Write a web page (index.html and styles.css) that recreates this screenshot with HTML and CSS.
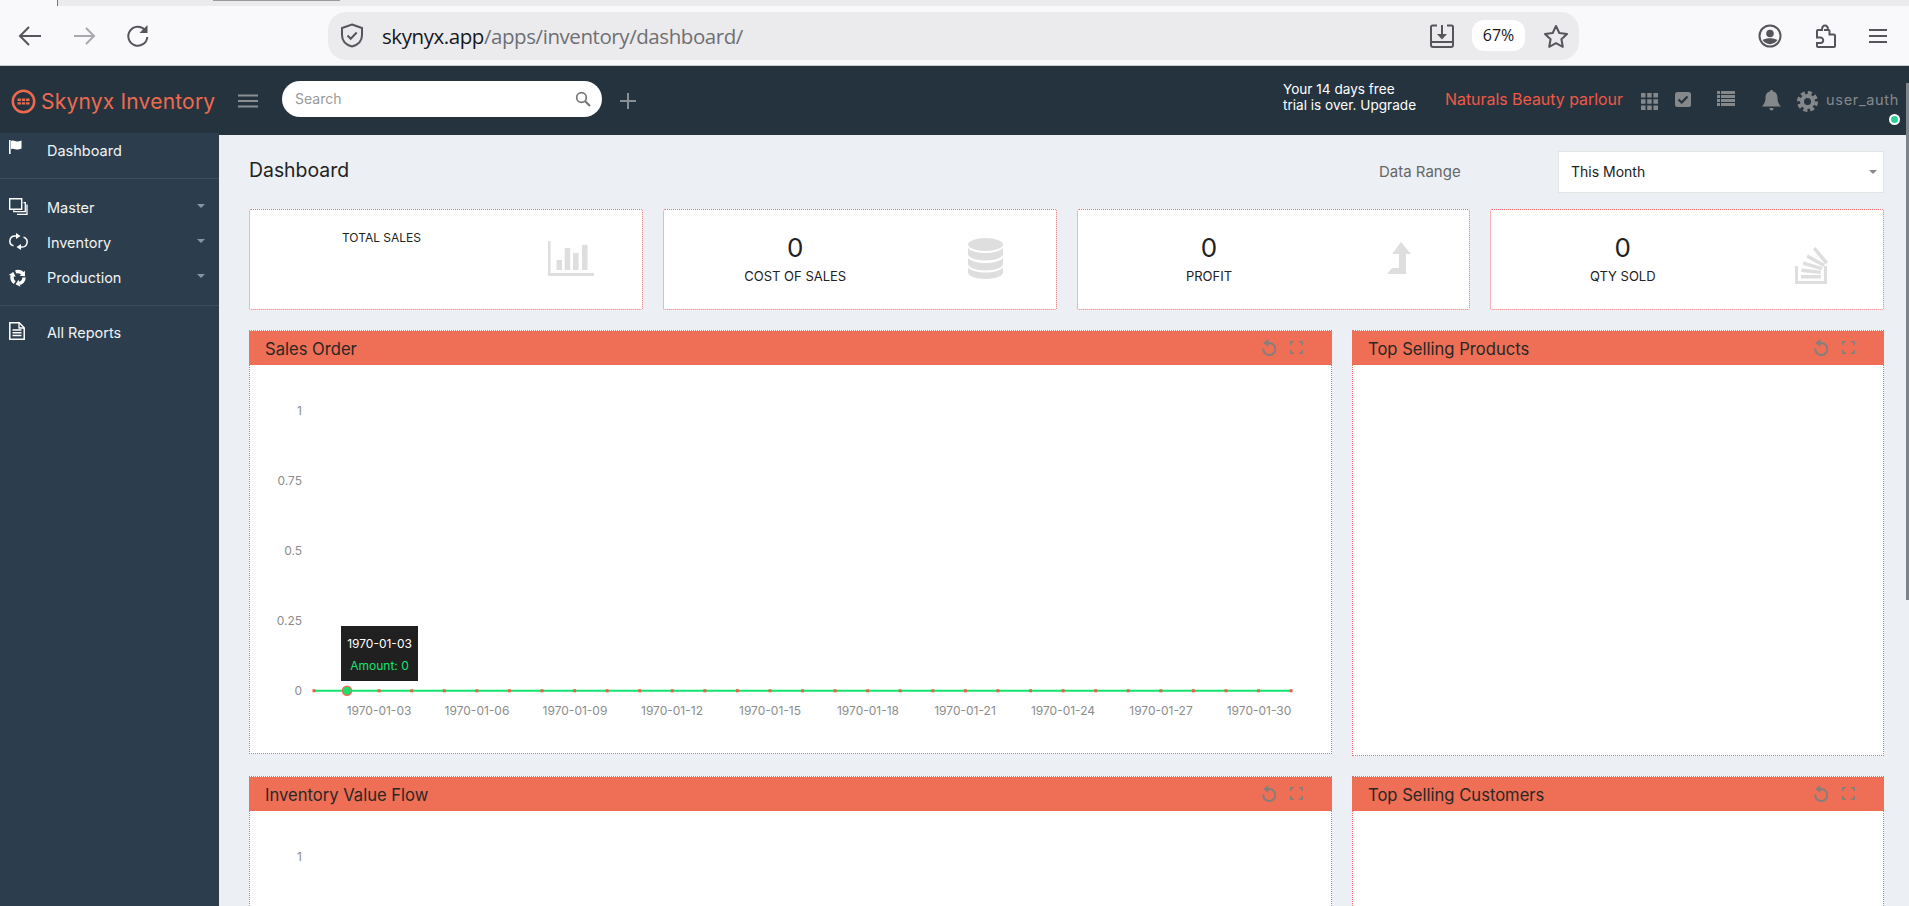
FILE: index.html
```html
<!DOCTYPE html>
<html lang="en">
  <head>
  <meta charset="utf-8">
  <title>Skynyx Inventory</title>
  <link rel="stylesheet" href="styles.css">
  </head>
  <body>
    <div class="tabstrip">
      <span class="tab-left"></span>
      <span class="tab-shadow"></span>
    </div>

    <div class="toolbar">
      <svg class="tool-back" width="24" height="22" viewBox="0 0 24 22"><path d="M23 11H3M11 2l-9 9 9 9" fill="none" stroke="#55555b" stroke-width="2"/></svg>
      <svg class="tool-fwd" width="22" height="22" viewBox="0 0 22 22"><path d="M0 11h19M12 3l8 8-8 8" fill="none" stroke="#a9a9ad" stroke-width="2"/></svg>
      <svg class="tool-reload" width="23" height="24" viewBox="0 0 23 24"><path d="M19 6a9.5 9.5 0 1 0 2.3 7" fill="none" stroke="#55555b" stroke-width="2"/><path d="M21.500 1v8h-8z" fill="#55555b"/></svg>
      <div class="addressbar">
        <svg class="shield" width="24" height="25" viewBox="0 0 24 25"><path d="M12 1.500l10 3.500v7c0 6-4.500 10-10 11.500C6.500 22 2 18 2 12V5z" fill="none" stroke="#55555b" stroke-width="2"/><path d="M7.500 12.500l3.200 3.200 6-6.200" fill="none" stroke="#55555b" stroke-width="2"/></svg>
        <div class="url"><span class="url-host">skynyx.app</span>/apps/inventory/dashboard/</div>
        <svg class="tool-install" width="24" height="24" viewBox="0 0 24 24"><path d="M7 1.500H2.500a1.500 1.500 0 0 0-1.500 1.500v18a2 2 0 0 0 2 2h18a2 2 0 0 0 2-2V3a1.500 1.500 0 0 0-1.500-1.500H17M1 18h22" fill="none" stroke="#55555b" stroke-width="2"/><path d="M12 1v11" stroke="#55555b" stroke-width="2"/><path d="M7 10h10l-5 5.500z" fill="#55555b"/></svg>
        <div class="zoom-pill">67%</div>
        <svg class="tool-star" width="26" height="24" viewBox="0 0 26 24"><path d="M13 2l3.300 7 7.700 1-5.600 5.300 1.400 7.500-6.800-3.700-6.800 3.700 1.400-7.500L2 10l7.700-1z" fill="none" stroke="#55555b" stroke-width="2" stroke-linejoin="round"/></svg>
      </div>
      <svg class="tool-profile" width="24" height="24" viewBox="0 0 24 24"><circle cx="12" cy="12" r="10.500" fill="none" stroke="#55555b" stroke-width="2"/><circle cx="12" cy="9.500" r="3.800" fill="#55555b"/><path d="M4.500 16c4-2.500 11-2.500 15 0-3.500 5.500-11.500 5.500-15 0z" fill="#55555b"/></svg>
      <svg class="tool-puzzle" width="21" height="24" viewBox="0 0 21 24"><path d="M9 6H13.500a1 1 0 0 1 1 1v3.500H19a1 1 0 0 1 1 1V22a1 1 0 0 1-1 1H3a1 1 0 0 1-1-1v-3h3.500a2.700 2.700 0 0 0 0-5.400H2V7a1 1 0 0 1 1-1h4c0-6 6-6 6 0" fill="none" stroke="#55555b" stroke-width="2"/></svg>
      <svg class="tool-menu" width="18" height="16" viewBox="0 0 18 16"><path d="M0 2h18M0 8h18M0 14h18" stroke="#55555b" stroke-width="2"/></svg>
    </div>

    <header class="topbar">
      <svg class="logo" width="25" height="25" viewBox="0 0 25 25"><circle cx="12.500" cy="12.500" r="10.700" fill="none" stroke="#ee6a4f" stroke-width="2.500"/><path d="M6.500 9.500h3.400v2.400H6.500zM10.800 9.500h3.400v2.400h-3.400zM15.100 9.500h3.400v2.400h-3.400zM6.500 13.200h3.400v2.400H6.500zM10.800 13.200h3.400v2.400h-3.400zM15.100 13.200h3.400v2.400h-3.400z" fill="#ee6a4f"/></svg>
      <div class="brand">Skynyx Inventory</div>
      <svg class="burger" width="20" height="14" viewBox="0 0 20 14"><path d="M0 1.500h20M0 7h20M0 12.500h20" stroke="#8a8f93" stroke-width="2.200"/></svg>
      <div class="search">
        <span class="search-text">Search</span>
        <svg width="16" height="16" viewBox="0 0 16 16"><circle cx="6.500" cy="6.500" r="4.800" fill="none" stroke="#777" stroke-width="1.700"/><path d="M10 10l5 5" stroke="#777" stroke-width="2.200"/></svg>
      </div>
      <svg class="plus" width="16" height="16" viewBox="0 0 16 16"><path d="M8 0v16M0 8h16" stroke="#8a8f93" stroke-width="2"/></svg>

      <div class="trial">Your 14 days free<br>trial is over. Upgrade</div>
      <div class="company">Naturals Beauty parlour</div>
      <svg class="ic-grid" width="17" height="17" viewBox="0 0 17 17"><path d="M0 0h4.500v4.500H0zM6.200 0h4.500v4.500H6.200zM12.400 0H17v4.500h-4.600zM0 6.200h4.500v4.500H0zM6.200 6.200h4.500v4.500H6.200zM12.400 6.200H17v4.500h-4.600zM0 12.400h4.500V17H0zM6.200 12.400h4.500V17H6.200zM12.400 12.400H17V17h-4.600z" fill="#85888b"/></svg>
      <svg class="ic-check" width="16" height="15" viewBox="0 0 16 15"><rect width="16" height="15" rx="2.500" fill="#85888b"/><path d="M3.500 7.500l3.200 3 5.800-6" fill="none" stroke="#25333f" stroke-width="2.200"/></svg>
      <svg class="ic-list" width="18" height="15" viewBox="0 0 18 15"><path d="M0 0h3v3H0zM4 0h14v3H4zM0 4h3v3H0zM4 4h14v3H4zM0 8h3v3H0zM4 8h14v3H4zM0 12h3v3H0zM4 12h14v3H4z" fill="#85888b"/></svg>
      <svg class="ic-bell" width="19" height="21" viewBox="0 0 19 21"><path d="M9.500 0c1 0 1.500.6 1.500 1.600 3.300.7 4.500 3.400 4.500 6.400 0 4 1.300 6 3.500 8.500H0c2.200-2.500 3.500-4.500 3.500-8.500 0-3 1.200-5.700 4.500-6.400C8 .6 8.500 0 9.500 0zM7.500 18h4c0 1.700-1 2.500-2 2.500s-2-.8-2-2.500z" fill="#85888b"/></svg>
      <svg class="ic-gear" width="21" height="21" viewBox="0 0 21 21"><circle cx="10.500" cy="10.500" r="8.800" fill="none" stroke="#85888b" stroke-width="3.400" stroke-dasharray="4.100 2.810"/><circle cx="10.500" cy="10.500" r="5.500" fill="none" stroke="#85888b" stroke-width="4"/></svg>
      <div class="user">user_auth</div>
      <span class="status-dot"></span>
    </header>

    <div class="app">
      <nav class="sidebar">
        <div class="nav-group first">
          <a class="nav-item">
            <svg class="nav-icon" width="13" height="14" viewBox="0 0 13 14"><path d="M0 0h1.600v14H0zM2 1c3-1.200 4 .6 6 .6 1.500 0 3-.4 4.500-1v8c-1.500.8-3 1-4.500 1-2 0-3-1.500-6-.4z" fill="#fff"/></svg>
            Dashboard
          </a>
        </div>
        <div class="nav-group middle">
          <a class="nav-item">
            <svg class="nav-icon" width="19" height="17" viewBox="0 0 19 17"><path d="M.700.700h12v10.600H.700z" fill="none" stroke="#fff" stroke-width="1.400"/><path d="M14.500 4.700h1.800v9h-11.500v-1.500M18 6.500v9.800H8" fill="none" stroke="#fff" stroke-width="1.300"/></svg>
            Master
            <span class="caret"></span>
          </a>
          <a class="nav-item">
            <svg class="nav-icon" width="19" height="17" viewBox="0 0 19 17"><path d="M7 3H6a5 5 0 0 0-1.500 9.800M12 14h1a5 5 0 0 0 1.500-9.800" fill="none" stroke="#fff" stroke-width="1.500"/><path d="M7 0l4.500 3L7 6zM12 11l-4.500 3 4.500 3z" fill="#fff"/></svg>
            Inventory
            <span class="caret"></span>
          </a>
          <a class="nav-item">
            <svg class="nav-icon" width="18" height="19" viewBox="0 0 18 19">
              <circle cx="9" cy="9.500" r="6" fill="none" stroke="#fff" stroke-width="3.400" stroke-dasharray="8 4.570"/>
              <path id="recycle-head" d="M11.300 18.800l-1.700-7-3 4.500z" fill="#fff"/>
              <use href="#recycle-head" transform="rotate(120 9 9.500)"/>
              <use href="#recycle-head" transform="rotate(240 9 9.500)"/>
            </svg>
            Production
            <span class="caret"></span>
          </a>
        </div>
        <div class="nav-group last">
          <a class="nav-item">
            <svg class="nav-icon" width="16" height="18" viewBox="0 0 16 18"><path d="M.800.800h9.400l5 5v11.400H.800z" fill="none" stroke="#fff" stroke-width="1.500"/><path d="M10 1v5h5" fill="none" stroke="#fff" stroke-width="1.300"/><path d="M3.500 8h9M3.500 10.700h9M3.500 13.400h9" stroke="#fff" stroke-width="1.500"/></svg>
            All Reports
          </a>
        </div>
      </nav>

      <main class="content">
        <div class="title-row">
          <h1 class="page-title">Dashboard</h1>
          <label class="range-label">Data Range</label>
          <div class="range-select">This Month<span class="caret range-caret"></span></div>
        </div>

        <div class="cards">
          <div class="card">
            <div class="card-text"><div class="card-label label-small">TOTAL SALES</div></div>
            <svg class="card-icon icon-bars" width="46" height="35" viewBox="0 0 46 35"><path d="M0 0h2.500v32H46v3H0z" fill="#dedede"/><path d="M8.500 19h5.500v10H8.500zM16.700 7h5.500v22h-5.500zM25 12h5.500v17H25zM34 4h5.500v25H34z" fill="#dedede"/></svg>
          </div>
          <div class="card">
            <div class="card-text"><div class="card-value">0</div><div class="card-label">COST OF SALES</div></div>
            <svg class="card-icon" width="35" height="41" viewBox="0 0 35 41"><ellipse cx="17.500" cy="6.500" rx="17.500" ry="6.500" fill="#dedede"/><path d="M0 10c3 3.500 10 5 17.500 5S32 13.500 35 10v6c0 3.600-8 6.500-17.500 6.500S0 19.600 0 16zM0 20c3 3.500 10 5 17.500 5S32 23.500 35 20v6c0 3.600-8 6.500-17.500 6.500S0 29.600 0 26zM0 29.500c3 3.500 10 5 17.500 5s14.500-1.500 17.500-5v5c0 3.600-8 6.500-17.500 6.500S0 38.100 0 34.500z" fill="#dedede"/></svg>
          </div>
          <div class="card">
            <div class="card-text"><div class="card-value">0</div><div class="card-label">PROFIT</div></div>
            <svg class="card-icon icon-up" width="24" height="32" viewBox="0 0 24 32"><path d="M14 0l10 12h-5v20H0l5-6h7V12H5z" fill="#dedede"/></svg>
          </div>
          <div class="card">
            <div class="card-text"><div class="card-value">0</div><div class="card-label">QTY SOLD</div></div>
            <svg class="card-icon icon-stack" width="34" height="40" viewBox="0 0 34 40"><path d="M0 22h3v15h26V22h3v18H0z" fill="#dedede"/><path d="M6 31h20v3.500H6zM6.500 24.500l19.500 2-.4 3.500-19.500-2zM8.500 17.500l19 5.500-1 3.300-19-5.500zM13 10.500l17 9.500-1.700 3-17-9.500zM20.500 3l12.500 15-2.700 2.200L18 5.300z" fill="#dedede"/></svg>
          </div>
        </div>

        <div class="panels">
          <section class="panel">
            <div class="panel-head">
              <span class="panel-title">Sales Order</span>
              <svg class="tool-undo" width="14" height="17" viewBox="0 0 14 17"><path d="M5 4.500a6 6 0 1 1-3.700 5" fill="none" stroke="#857f7c" stroke-width="2"/><path d="M6.500 0v8L1 4z" fill="#857f7c"/></svg>
              <svg class="tool-expand" width="13" height="13" viewBox="0 0 13 13"><path d="M.8 4V.8H4M9 .8h3.200V4M12.200 9v3.200H9M4 12.200H.8V9" fill="none" stroke="#857f7c" stroke-width="1.600"/></svg>
            </div>
            <svg class="chart" width="1081" height="388" viewBox="0 0 1081 388">
              <g class="y-ticks">
                <text x="52" y="50">1</text>
                <text x="52" y="120">0.75</text>
                <text x="52" y="190">0.5</text>
                <text x="52" y="260">0.25</text>
                <text x="52" y="330">0</text>
              </g>
              <g class="x-ticks">
                <text x="129" y="350">1970-01-03</text>
                <text x="227" y="350">1970-01-06</text>
                <text x="325" y="350">1970-01-09</text>
                <text x="422" y="350">1970-01-12</text>
                <text x="520" y="350">1970-01-15</text>
                <text x="618" y="350">1970-01-18</text>
                <text x="715" y="350">1970-01-21</text>
                <text x="813" y="350">1970-01-24</text>
                <text x="911" y="350">1970-01-27</text>
                <text x="1009" y="350">1970-01-30</text>
              </g>
              <line x1="64" y1="325.700" x2="1041" y2="325.700" stroke="#12e56f" stroke-width="2"/>
              <line class="points" x1="62.500" y1="325.700" x2="1043" y2="325.700"/>
              <circle cx="97" cy="325.700" r="4.500" fill="#12e56f" stroke="#ee6f55" stroke-width="1.500"/>
              <rect x="91" y="261" width="77" height="55" fill="#202020"/>
              <text class="tip-date" x="129.500" y="283">1970-01-03</text>
              <text class="tip-amount" x="129.500" y="305">Amount: 0</text>
            </svg>
          </section>
          <section class="panel panel-tall">
            <div class="panel-head">
              <span class="panel-title">Top Selling Products</span>
              <svg class="tool-undo" width="14" height="17" viewBox="0 0 14 17"><path d="M5 4.500a6 6 0 1 1-3.700 5" fill="none" stroke="#857f7c" stroke-width="2"/><path d="M6.500 0v8L1 4z" fill="#857f7c"/></svg>
              <svg class="tool-expand" width="13" height="13" viewBox="0 0 13 13"><path d="M.8 4V.8H4M9 .8h3.200V4M12.200 9v3.200H9M4 12.200H.8V9" fill="none" stroke="#857f7c" stroke-width="1.600"/></svg>
            </div>
          </section>
          <section class="panel">
            <div class="panel-head">
              <span class="panel-title">Inventory Value Flow</span>
              <svg class="tool-undo" width="14" height="17" viewBox="0 0 14 17"><path d="M5 4.500a6 6 0 1 1-3.700 5" fill="none" stroke="#857f7c" stroke-width="2"/><path d="M6.500 0v8L1 4z" fill="#857f7c"/></svg>
              <svg class="tool-expand" width="13" height="13" viewBox="0 0 13 13"><path d="M.8 4V.8H4M9 .8h3.200V4M12.200 9v3.200H9M4 12.200H.8V9" fill="none" stroke="#857f7c" stroke-width="1.600"/></svg>
            </div>
            <svg class="chart" width="1081" height="388" viewBox="0 0 1081 388">
              <g class="y-ticks"><text x="52" y="50">1</text></g>
            </svg>
          </section>
          <section class="panel">
            <div class="panel-head">
              <span class="panel-title">Top Selling Customers</span>
              <svg class="tool-undo" width="14" height="17" viewBox="0 0 14 17"><path d="M5 4.500a6 6 0 1 1-3.700 5" fill="none" stroke="#857f7c" stroke-width="2"/><path d="M6.500 0v8L1 4z" fill="#857f7c"/></svg>
              <svg class="tool-expand" width="13" height="13" viewBox="0 0 13 13"><path d="M.8 4V.8H4M9 .8h3.200V4M12.200 9v3.200H9M4 12.200H.8V9" fill="none" stroke="#857f7c" stroke-width="1.600"/></svg>
            </div>
          </section>
        </div>
      </main>
    </div>
    <span class="scrollbar"></span>
  </body>
</html>
```

FILE: styles.css
```css
html, body { height: 100vh; padding: 0; margin: 0; overflow: hidden; }
body {
  display: flex; flex-direction: column; background: #ecf0f5;
  color: #222; font: 14px/1.4 Inter, "Open Sans", "Liberation Sans", sans-serif;
}
svg { display: block; flex: none; }

/* browser chrome */
.tabstrip { height: 6px; background: #ebebed; display: flex; flex: none; }
.tab-left { width: 57px; background: #f9f9fb; border-right: 1px solid #77777b; }
.tab-shadow { width: 127px; height: 1px; margin-left: 155px; background: #9a9a9e; }
.toolbar {
  height: 59px; flex: none; display: flex; align-items: center;
  background: #f9f9fb; border-bottom: 1px solid #c9cacc;
}
.tool-back { margin-left: 18px; }
.tool-fwd { margin-left: 32px; }
.tool-reload { margin-left: 30px; }
.addressbar {
  width: 1251px; height: 48px; margin-left: 179px; display: flex; align-items: center;
  background: #ebebed; border-radius: 18px;
}
.shield { margin-left: 12px; }
.url {
  margin-left: 18px; width: 1048px; white-space: nowrap; color: #6f6f73;
  font: 20.5px "Open Sans", sans-serif; letter-spacing: -0.43px;
}
.url-host { color: #17171a; }
.zoom-pill {
  width: 53px; height: 31px; margin-left: 18px; background: #fff; border-radius: 12px;
  text-align: center; font: 16px/31px "Open Sans", sans-serif; color: #17171a;
}
.tool-star { margin-left: 18px; }
.tool-profile { margin-left: 179px; }
.tool-puzzle { margin-left: 33px; }
.tool-menu { margin-left: 33px; }

/* app top bar */
.topbar {
  height: 69px; flex: none; display: flex; align-items: center; position: relative;
  background: #25333f;
}
.logo { margin: 2px 0 0 11px; }
.brand {
  margin: 2px 0 0 5px; width: 173px; white-space: nowrap;
  font-size: 21px; letter-spacing: 0.2px; color: #ee6a4f;
}
.burger { margin-left: 24px; }
.search {
  width: 320px; height: 36px; margin: -3px 0 0 24px; padding: 0 11px 0 13px; box-sizing: border-box;
  display: flex; align-items: center; justify-content: space-between;
  background: #fff; border-radius: 18px;
}
.search-text { color: #9a9a9a; font-size: 14px; }
.plus { margin-left: 18px; }
.trial { margin: -5px 0 0 647px; width: 162px; color: #fff; font-size: 13.6px; line-height: 15.600px; }
.company { width: 196px; white-space: nowrap; color: #ee5a45; font-size: 15.9px; }
.ic-grid { margin-top: 2px; }
.ic-check { margin-left: 17px; margin-top: -3px; }
.ic-list { margin-left: 26px; margin-top: -4px; }
.ic-bell { margin-left: 27px; }
.ic-gear { margin-left: 16px; margin-top: 2px; }
.user { margin-left: 8px; color: #85888b; font-size: 14.5px; letter-spacing: 0.7px; white-space: nowrap; }
.status-dot {
  position: absolute; left: 1889px; top: 48px; width: 7px; height: 7px;
  background: #2fcf9a; border: 2px solid #fff; border-radius: 50%;
}

.app { flex: 1; display: flex; min-height: 0; }

/* sidebar */
.sidebar { width: 219px; flex: none; margin-top: -2px; background: #2c3e4d; position: relative; }
.nav-group.first { padding-bottom: 9px; border-bottom: 1px solid #3c4e5c; }
.nav-group.middle { padding: 12px 0 9px; border-bottom: 1px solid #3c4e5c; }
.nav-group.last { padding-top: 9px; }
.nav-item { height: 35px; display: flex; align-items: center; color: #f1f3f4; font-size: 14.5px; position: relative; padding-left: 47px; }
.first .nav-item { height: 36px; }
.last .nav-item { height: 36px; }
.nav-icon { position: absolute; left: 9px; top: 7px; }
.caret {
  width: 0; height: 0; border: 4px solid transparent; border-top-color: #8a959e; border-bottom: 0;
}
.nav-item .caret { position: absolute; left: 197px; top: 13px; }

/* main area */
.content { flex: 1; min-width: 0; padding: 16px 25px 0 30px; overflow: hidden; }
.title-row { height: 42px; display: flex; align-items: center; margin-bottom: 16px; }
.page-title { margin: -3px 0 0; font-size: 19.4px; font-weight: 400; color: #222; }
.range-label { margin: -1px 0 0 auto; width: 179px; color: #666; font-size: 15px; }
.range-select {
  width: 326px; height: 42px; box-sizing: border-box; padding-left: 12px;
  display: flex; align-items: center; justify-content: space-between;
  background: #fff; border: 1px solid #e4e4e4; color: #222; font-size: 14px;
}
.range-caret { margin-right: 6px; border-top-color: #888; }

.cards { display: grid; grid-template-columns: repeat(4, 1fr); gap: 20px; margin-bottom: 20px; }
.card {
  height: 101px; box-sizing: border-box; display: flex; position: relative;
  background: #fff; border: 1px dotted #f0686c; border-radius: 2px;
}
.card-text { width: 263px; padding-top: 18px; text-align: center; }
.card-value { height: 38px; font-size: 26px; line-height: 40px; color: #222; }
.card-label { height: 20px; font-size: 13px; line-height: 20px; color: #222; }
.label-small { font-size: 12px; }
.card-icon { margin: 28px 0 0 41px; }
.icon-bars { margin: 31px 0 0 35px; }
.icon-up { margin: 32px 0 0 46px; }
.icon-stack { margin: 34px 0 0 41px; }

.panels { display: grid; grid-template-columns: 1083px 1fr; gap: 20px; align-items: start; }
.panel { height: 424px; box-sizing: border-box; background: #fff; border: 1px dotted #f0686c; }
.panel-tall { height: 426px; }
.panel-head {
  height: 34px; display: flex; align-items: center; padding: 0 29px 0 16px;
  background: #ee6f55; margin: 0 -1px;
}
.panel-title { margin: 3px auto 0 0; color: #2b2725; font-size: 16.6px; }
.tool-undo { margin: -1px 14px 0 0; }
.tool-expand { margin-top: -1px; }
.chart text { font-size: 12px; fill: #8c8c8c; }
.y-ticks text { text-anchor: end; }
.x-ticks text { text-anchor: middle; }
.points { stroke: #e8603c; stroke-width: 3; stroke-dasharray: 3 29.570; }
.chart .tip-date { fill: #fff; text-anchor: middle; }
.chart .tip-amount { fill: #17e36f; text-anchor: middle; }

.scrollbar { position: absolute; left: 1906px; top: 83px; width: 3px; height: 517px; background: #7d8388; }
```
